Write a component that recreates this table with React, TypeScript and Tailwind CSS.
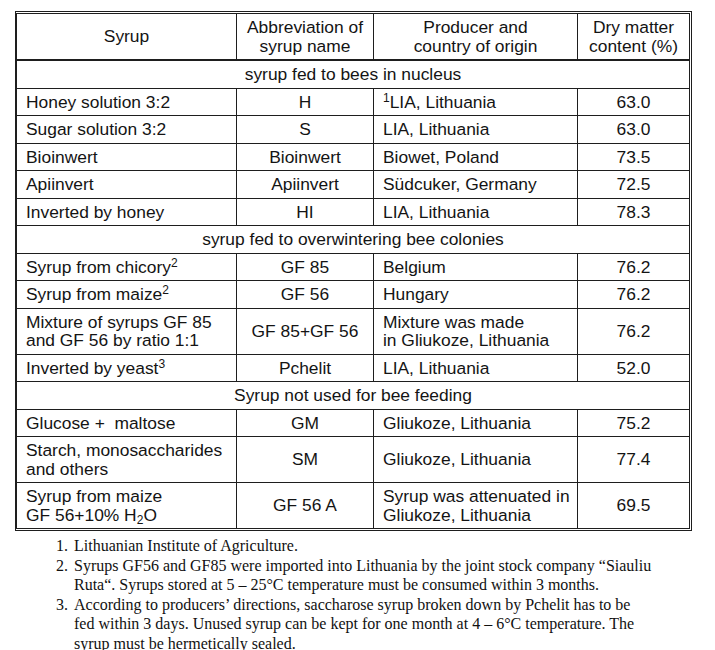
import React from "react";

type Row =
  | { section: string }
  | { syrup: React.ReactNode; abbr: string; producer: React.ReactNode; dry: string };

const rows: Row[] = [
  { section: "syrup fed to bees in nucleus" },
  { syrup: "Honey solution 3:2", abbr: "H", producer: <><sup>1</sup>LIA, Lithuania</>, dry: "63.0" },
  { syrup: "Sugar solution 3:2", abbr: "S", producer: "LIA, Lithuania", dry: "63.0" },
  { syrup: "Bioinwert", abbr: "Bioinwert", producer: "Biowet, Poland", dry: "73.5" },
  { syrup: "Apiinvert", abbr: "Apiinvert", producer: "Südcuker, Germany", dry: "72.5" },
  { syrup: "Inverted by honey", abbr: "HI", producer: "LIA, Lithuania", dry: "78.3" },
  { section: "syrup fed to overwintering bee colonies" },
  { syrup: <>Syrup from chicory<sup>2</sup></>, abbr: "GF 85", producer: "Belgium", dry: "76.2" },
  { syrup: <>Syrup from maize<sup>2</sup></>, abbr: "GF 56", producer: "Hungary", dry: "76.2" },
  {
    syrup: <>Mixture of syrups GF 85<br />and GF 56 by ratio 1:1</>,
    abbr: "GF 85+GF 56",
    producer: <>Mixture was made<br />in Gliukoze, Lithuania</>,
    dry: "76.2",
  },
  { syrup: <>Inverted by yeast<sup>3</sup></>, abbr: "Pchelit", producer: "LIA, Lithuania", dry: "52.0" },
  { section: "Syrup not used for bee feeding" },
  { syrup: "Glucose +\u00a0 maltose", abbr: "GM", producer: "Gliukoze, Lithuania", dry: "75.2" },
  { syrup: <>Starch, monosaccharides<br />and others</>, abbr: "SM", producer: "Gliukoze, Lithuania", dry: "77.4" },
  {
    syrup: <>Syrup from maize<br />GF 56+10% H<sub>2</sub>O</>,
    abbr: "GF 56 A",
    producer: <>Syrup was attenuated in<br />Gliukoze, Lithuania</>,
    dry: "69.5",
  },
];

const cell = "border border-[#1e1e1e] py-[4px] align-middle";

export default function App() {
  return (
    <div className="min-h-screen bg-white pl-[15px] pt-[11px] text-[#141414]">
      <div className="w-[677px] border border-[#1e1e1e] p-px pl-0">
        <table
          className="w-full table-fixed border-collapse text-[17.4px] leading-[18.5px] [&_sup]:text-[12px] [&_sub]:text-[12px]"
          style={{ fontFamily: '"Liberation Sans", Arial, sans-serif' }}
        >
          <colgroup>
            <col className="w-[220px]" />
            <col className="w-[137px]" />
            <col className="w-[204px]" />
            <col className="w-[112px]" />
          </colgroup>
          <thead>
            <tr>
              <th className={`${cell} border-b-2 font-normal text-center`}>Syrup</th>
              <th className={`${cell} border-b-2 font-normal text-center`}>
                Abbreviation of
                <br />
                syrup name
              </th>
              <th className={`${cell} border-b-2 font-normal text-center`}>
                Producer and
                <br />
                country of origin
              </th>
              <th className={`${cell} border-b-2 font-normal text-center`}>
                Dry matter
                <br />
                content (%)
              </th>
            </tr>
          </thead>
          <tbody>
            {rows.map((r, i) =>
              "section" in r ? (
                <tr key={i}>
                  <td colSpan={4} className={`${cell} text-center`}>
                    {r.section}
                  </td>
                </tr>
              ) : (
                <tr key={i}>
                  <td className={`${cell} pl-[9px] text-left`}>{r.syrup}</td>
                  <td className={`${cell} text-center`}>{r.abbr}</td>
                  <td className={`${cell} pl-[9px] text-left`}>{r.producer}</td>
                  <td className={`${cell} text-center`}>{r.dry}</td>
                </tr>
              )
            )}
          </tbody>
        </table>
      </div>

      {/* notes under the table */}
      <ol
        className="mt-[5px] pl-[41px] text-[16px] leading-[19.5px] text-[#111]"
        style={{ fontFamily: '"Liberation Serif", "Times New Roman", serif' }}
      >
        <li className="flex">
          <span className="w-[18px] shrink-0">1.</span>
          <span>Lithuanian Institute of Agriculture.</span>
        </li>
        <li className="flex">
          <span className="w-[18px] shrink-0">2.</span>
          <span className="whitespace-nowrap">
            Syrups GF56 and GF85 were imported into Lithuania by the joint stock company “Siauliu
            <br />
            Ruta“. Syrups stored at 5 – 25°C temperature must be consumed within 3 months.
          </span>
        </li>
        <li className="flex">
          <span className="w-[18px] shrink-0">3.</span>
          <span className="whitespace-nowrap">
            According to producers’ directions, saccharose syrup broken down by Pchelit has to be
            <br />
            fed within 3 days. Unused syrup can be kept for one month at 4 – 6°C temperature. The
            <br />
            syrup must be hermetically sealed.
          </span>
        </li>
      </ol>
    </div>
  );
}
